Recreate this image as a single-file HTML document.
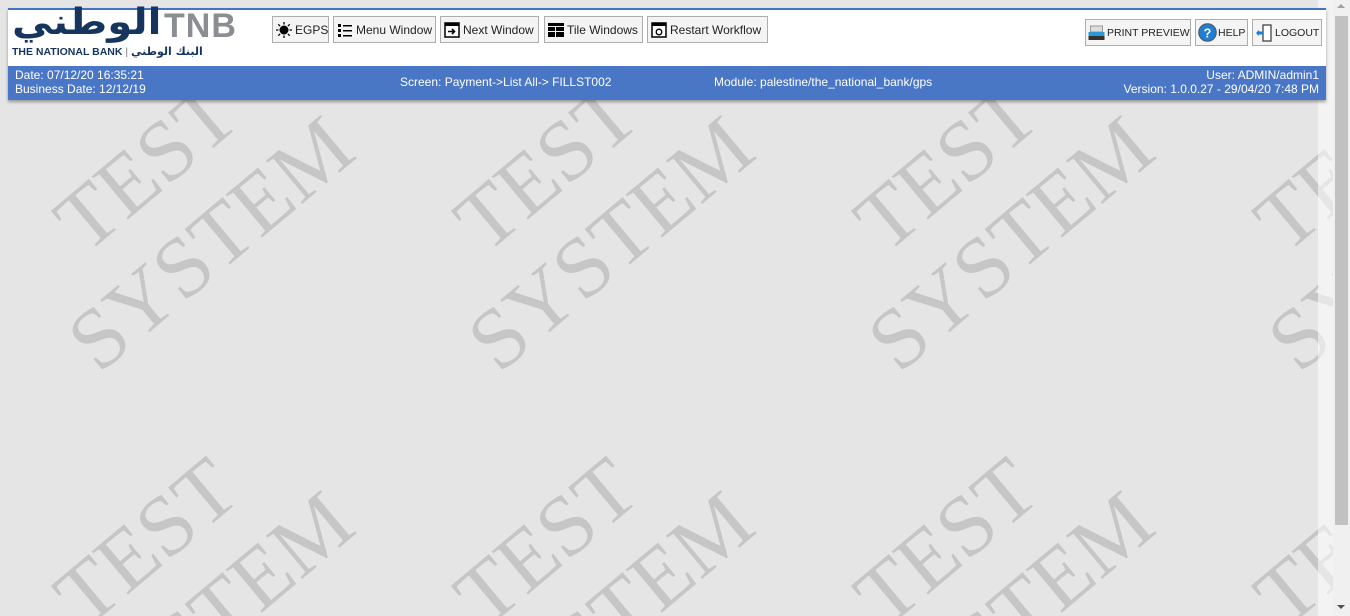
<!DOCTYPE html>
<html><head><meta charset="utf-8"><style>
*{margin:0;padding:0;box-sizing:border-box}
html,body{width:1350px;height:616px;overflow:hidden}
body{background:#e5e5e5;position:relative;font-family:"Liberation Sans","DejaVu Sans",sans-serif}
.wmbox{position:absolute;left:0;top:0;width:1350px;height:616px;overflow:hidden}
.wm{position:absolute;width:400px;text-align:center;font-family:"Liberation Serif",serif;font-size:86px;line-height:100px;color:#c6c6c6;transform:translate(-50%,-50%) rotate(-40deg);white-space:nowrap}
.strip{position:absolute;left:1318px;top:0;width:15px;height:616px;background:rgba(255,255,255,.55)}
.sb{position:absolute;left:1333px;top:0;width:17px;height:616px;background:#f0f0f0}
.thumb{position:absolute;left:1335px;top:16px;width:13px;height:509px;background:#c1c1c1}
.hdr{position:absolute;left:8px;top:8px;width:1318px;height:92px;background:#fff;border-top:2px solid #4472c4;box-shadow:0 2px 3px rgba(0,0,0,.35)}
.bar{position:absolute;left:0;top:56px;width:100%;height:34px;background:#4a76c6;color:#fff;font-size:12px;line-height:14px}
.btn{position:absolute;height:27px;border:1px solid #adadad;background:#f4f4f4;font-size:12px;color:#222;display:flex;align-items:center;padding-left:3px;gap:3px;white-space:nowrap;overflow:hidden}
.ic{width:16px;height:16px;display:inline-block;flex:none}
</style></head><body>
<div class="wmbox">
<div class="wm" style="left:178px;top:205px">TEST<br>SYSTEM</div>
<div class="wm" style="left:578px;top:205px">TEST<br>SYSTEM</div>
<div class="wm" style="left:978px;top:205px">TEST<br>SYSTEM</div>
<div class="wm" style="left:1378px;top:205px">TEST<br>SYSTEM</div>
<div class="wm" style="left:178px;top:580px">TEST<br>SYSTEM</div>
<div class="wm" style="left:578px;top:580px">TEST<br>SYSTEM</div>
<div class="wm" style="left:978px;top:580px">TEST<br>SYSTEM</div>
<div class="wm" style="left:1378px;top:580px">TEST<br>SYSTEM</div>
</div>
<div class="strip"></div>
<div class="sb"></div><div class="thumb"></div>
<div style="position:absolute;left:1337px;top:4px;border:4px solid transparent;border-bottom:4px solid #a0a0a0;border-top:0"></div>
<div style="position:absolute;left:1337px;top:605px;border:4px solid transparent;border-top:4px solid #505050;border-bottom:0"></div>
<div class="hdr">
 <div style="position:absolute;left:4px;top:0;width:245px;height:34px">
  <span style="position:absolute;left:0;top:-8px;font-family:'DejaVu Sans',sans-serif;font-weight:bold;font-size:36px;color:#15355f;letter-spacing:-1px;transform:scaleX(1.12);transform-origin:left;display:inline-block">الوطني</span>
  <span style="position:absolute;left:152px;top:-3px;font-weight:bold;font-size:34px;color:#8a8d91;letter-spacing:1px">TNB</span>
 </div>
 <div style="position:absolute;left:4px;top:35px;font-size:10.5px;font-weight:bold;color:#15355f;white-space:nowrap">THE NATIONAL BANK <span style="color:#777;font-weight:normal">|</span> <span style="font-family:'DejaVu Sans',sans-serif;font-size:11px">البنك الوطني</span></div>
 <div class="btn" style="left:264px;top:6px;width:57px"><svg class="ic" viewBox="0 0 16 16"><circle cx="8" cy="8" r="4.5" fill="#000"/><g stroke="#000" stroke-width="1.3"><path d="M8 0v2.5M8 13.5V16M0 8h2.5M13.5 8H16M2.3 2.3l1.8 1.8M11.9 11.9l1.8 1.8M2.3 13.7l1.8-1.8M11.9 4.1l1.8-1.8"/></g></svg>EGPS</div>
 <div class="btn" style="left:325px;top:6px;width:103px"><svg class="ic" viewBox="0 0 16 16" fill="#000"><rect x="1" y="2" width="3" height="3"/><rect x="1" y="7" width="3" height="3"/><rect x="1" y="12" width="3" height="3"/><rect x="6" y="3" width="9" height="1.5"/><rect x="6" y="8" width="9" height="1.5"/><rect x="6" y="13" width="9" height="1.5"/></svg>Menu Window</div>
 <div class="btn" style="left:432px;top:6px;width:99px"><svg class="ic" viewBox="0 0 16 16"><rect x="1" y="1" width="14" height="14" fill="#fff" stroke="#000" stroke-width="1.5"/><rect x="1" y="1" width="14" height="3" fill="#000"/><path d="M4 9.5h6M8 7l2.5 2.5L8 12" stroke="#000" stroke-width="1.6" fill="none"/></svg>Next Window</div>
 <div class="btn" style="left:536px;top:6px;width:99px"><svg class="ic" viewBox="0 0 16 16" fill="#000"><rect x="0" y="1" width="16" height="3"/><rect x="0" y="5" width="7" height="4"/><rect x="8" y="5" width="8" height="4"/><rect x="0" y="10" width="7" height="5"/><rect x="8" y="10" width="8" height="5"/></svg>Tile Windows</div>
 <div class="btn" style="left:639px;top:6px;width:121px"><svg class="ic" viewBox="0 0 16 16"><rect x="1" y="1" width="14" height="14" fill="#fff" stroke="#000" stroke-width="1.5"/><rect x="1" y="1" width="14" height="3" fill="#000"/><circle cx="8" cy="10" r="2.8" fill="none" stroke="#000" stroke-width="1.3"/></svg>Restart Workflow</div>
 <div class="btn" style="left:1077px;top:9px;width:106px;font-size:10.5px;gap:2px;padding-left:2px"><svg class="ic" viewBox="0 0 16 16" style="width:17px"><rect x="2" y="1" width="12" height="6" fill="#ddd" stroke="#999"/><rect x="0" y="7" width="16" height="4" fill="#2a9ad6"/><rect x="0" y="11" width="16" height="4" fill="#333"/></svg>PRINT PREVIEW</div>
 <div class="btn" style="left:1187px;top:9px;width:53px;font-size:10.5px;padding-left:2px;gap:1px"><svg class="ic" viewBox="0 0 18 18" style="width:19px;height:19px"><circle cx="9" cy="9" r="8.3" fill="#1e7fd4" stroke="#555" stroke-width="1"/><text x="9" y="13.5" font-size="12" font-weight="bold" fill="#fff" text-anchor="middle" font-family="Liberation Sans">?</text></svg>HELP</div>
 <div class="btn" style="left:1244px;top:9px;width:70px;font-size:10.5px"><svg class="ic" viewBox="0 0 16 18" style="width:16px;height:18px"><rect x="7" y="1" width="8" height="16" fill="#fff" stroke="#444" stroke-width="1.3"/><path d="M1 9h6" stroke="#1e7fd4" stroke-width="3"/><path d="M0 9l3-3v6z" fill="#1e7fd4"/></svg>LOGOUT</div>
 <div class="bar">
  <div style="position:absolute;left:7px;top:2px">Date: 07/12/20 16:35:21<br>Business Date: 12/12/19</div>
  <div style="position:absolute;left:392px;top:9px">Screen: Payment-&gt;List All-&gt; FILLST002</div>
  <div style="position:absolute;left:706px;top:9px">Module: palestine/the_national_bank/gps</div>
  <div style="position:absolute;right:7px;top:2px;text-align:right">User: ADMIN/admin1<br>Version: 1.0.0.27 - 29/04/20 7:48 PM</div>
 </div>
</div>
</body></html>
